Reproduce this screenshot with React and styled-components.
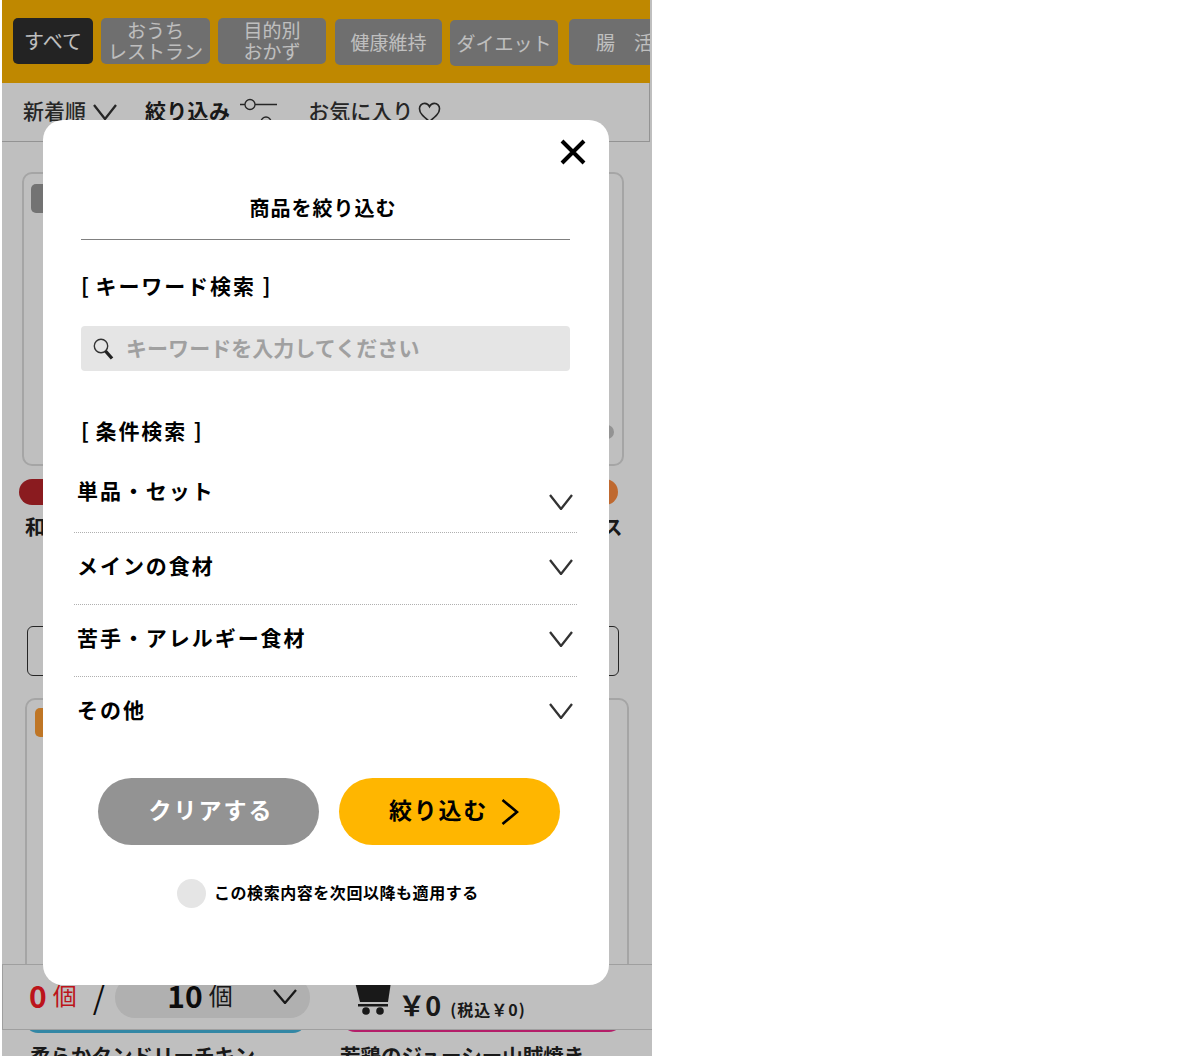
import React from "react";
import styled, { createGlobalStyle } from "styled-components";

const Global = createGlobalStyle`
  html, body { margin: 0; padding: 0; background: #fff; }
  body { font-family: "Noto Sans CJK JP", "Noto Sans", sans-serif; color: #222; }
  * { box-sizing: border-box; }
`;

const Page = styled.div`
  position: relative;
  width: 650px;
  height: 1056px;
  margin-left: 2px;
  background: #fff;
  overflow: hidden;
`;
const TabBar = styled.div`
  display: flex;
  align-items: flex-start;
  gap: 8px;
  width: 648px;
  height: 83px;
  padding: 18px 0 0 11px;
  background: #ffb600;
  overflow: hidden;
`;
const Tab = styled.div`
  flex: none;
  display: flex;
  align-items: center;
  justify-content: center;
  width: ${(p) => p.$w}px;
  height: 46px;
  margin-top: ${(p) => p.$drop || 0}px;
  margin-left: ${(p) => p.$ml || 0}px;
  padding-bottom: 2px;
  border-radius: 5px;
  background: ${(p) => (p.$active ? "#2f2f2f" : "#959595")};
  color: #fff;
  font-size: ${(p) => (p.$active ? 20 : 19)}px;
  line-height: 21px;
  text-align: center;
  white-space: pre-line;
`;
const SortBar = styled.div`
  display: flex;
  align-items: flex-start;
  width: 648px;
  height: 59px;
  padding: 14px 0 0 21px;
  border-right: 1px solid #c4c4c4;
  border-bottom: 1px solid #c4c4c4;
  font-size: 21px;
  font-weight: 500;
  color: #333;
`;
const SortItem = styled.div`
  display: flex;
  align-items: center;
  gap: ${(p) => p.$gap || 8}px;
  margin-right: ${(p) => p.$mr || 0}px;
  font-weight: ${(p) => p.$weight || 500};
  letter-spacing: ${(p) => p.$ls || 0}px;
  color: ${(p) => p.$color || "#333"};
`;
const SortText = styled.span`
  line-height: 26px;
  margin-bottom: 4px;
`;
const List = styled.div`
  padding: 30px 0 0;
`;
const Card = styled.div`
  position: relative;
  width: ${(p) => p.$w}px;
  height: ${(p) => p.$h}px;
  margin-left: ${(p) => p.$ml}px;
  border: 2px solid #dcdcdc;
  border-radius: 10px;
  background: #fff;
`;
const CardBadge = styled.div`
  width: 60px;
  height: 29px;
  margin: ${(p) => p.$m};
  border-radius: 5px;
  background: ${(p) => p.$bg};
`;
const CardDot = styled.span`
  position: absolute;
  right: ${(p) => p.$r}px;
  bottom: ${(p) => p.$b}px;
  width: 14px;
  height: 14px;
  border-radius: 50%;
  background: #c4c4c4;
`;
const PillRow = styled.div`
  display: flex;
  justify-content: space-between;
  margin: ${(p) => p.$m};
  padding: ${(p) => p.$p};
`;
const Pill = styled.div`
  width: ${(p) => p.$w}px;
  height: 26px;
  margin-top: ${(p) => p.$mt || 0}px;
  border-radius: 13px;
  background: ${(p) => p.$bg};
`;
const NameRow = styled.div`
  display: flex;
  justify-content: space-between;
  height: 30px;
  margin: ${(p) => p.$m};
  padding: ${(p) => p.$p};
  font-size: 20.5px;
  font-weight: 700;
  line-height: 26px;
  color: #222;
`;
const NameCell = styled.div`
  width: ${(p) => p.$w}px;
  white-space: nowrap;
`;
const MoreButton = styled.div`
  width: 592px;
  height: 50px;
  margin: 83px 0 22px 25px;
  border: 1px solid #333;
  border-radius: 6px;
`;

const BottomBar = styled.div`
  position: absolute;
  left: 0;
  top: 964px;
  width: 652px;
  height: 66px;
  display: flex;
  align-items: center;
  padding: 0 0 4px 26px;
  background: #fff;
  border: 1px solid #d4d4d4;
`;
const Count = styled.span`
  font-size: ${(p) => p.$size}px;
  font-weight: ${(p) => p.$weight};
  color: ${(p) => p.$color || "#111"};
  line-height: 40px;
  margin: ${(p) => p.$m || 0};
`;
const Slash = styled.span`
  font-size: 32px;
  line-height: 40px;
  margin: 0 10px 0 16px;
  color: #111;
`;
const Select = styled.div`
  display: flex;
  align-items: center;
  width: 195px;
  height: 41px;
  margin-top: 4px;
  padding: 0 0 4px 52px;
  border-radius: 20px;
  background: #ebebeb;
`;
const SelectArrow = styled.span`
  display: flex;
  margin: 2px 0 0 40px;
`;
const CartWrap = styled.span`
  display: flex;
  margin: 4px 7px 0 45px;
`;
const TotalBox = styled.div`
  display: flex;
  flex-direction: column;
  gap: 6px;
  margin-top: 4px;
`;
const TotalLabel = styled.span`
  font-size: 12px;
  line-height: 14px;
  font-weight: 700;
  color: #222;
`;
const TotalLine = styled.div`
  display: flex;
  align-items: baseline;
  line-height: 34px;
  color: #222;
`;
const TotalPrice = styled.span`
  font-size: 27px;
  font-weight: 700;
  margin-right: 9px;
`;
const TotalTax = styled.span`
  font-size: 16px;
  font-weight: 700;
  letter-spacing: 1px;
`;

const Overlay = styled.div`
  position: absolute;
  inset: 0;
  background: rgba(0, 0, 0, 0.25);
`;
const Modal = styled.div`
  position: absolute;
  left: 41px;
  top: 120px;
  width: 566px;
  height: 865px;
  padding: 73px 39px 0 38px;
  border-radius: 20px;
  background: #fff;
  color: #000;
`;
const Close = styled.span`
  position: absolute;
  right: 23px;
  top: 19px;
  display: flex;
`;
const Title = styled.div`
  height: 47px;
  padding-right: 5px;
  border-bottom: 1.4px solid #808080;
  font-size: 20px;
  font-weight: 700;
  line-height: 30px;
  letter-spacing: 1px;
  text-align: center;
`;
const Heading = styled.div`
  margin-top: ${(p) => p.$mt}px;
  height: 30px;
  font-size: 21px;
  font-weight: 700;
  line-height: 26px;
  letter-spacing: 1.9px;
  word-spacing: -2px;
`;
const HeadingClose = styled.span`
  margin-left: 2px;
`;
const SearchBox = styled.div`
  display: flex;
  align-items: center;
  gap: 12px;
  height: 45px;
  margin-top: 24px;
  padding-left: 12px;
  border-radius: 4px;
  background: #e5e5e5;
`;
const Placeholder = styled.span`
  margin-bottom: 4px;
  font-size: 21px;
  font-weight: 700;
  letter-spacing: 0.05px;
  color: #a0a0a0;
`;
const Rows = styled.div`
  margin: 0 -7px;
`;
const Row = styled.div`
  display: flex;
  align-items: center;
  justify-content: space-between;
  height: ${(p) => (p.$first ? 86 : 72)}px;
  padding: ${(p) => (p.$first ? "30px 4px 25px 3px" : "0 4px 4px 3px")};
  border-bottom: ${(p) => (p.$last ? "none" : "1px dotted #b0b0b0")};
`;
const RowLabel = styled.span`
  margin-bottom: 4px;
  font-size: 21px;
  font-weight: 700;
  line-height: 26px;
  letter-spacing: 1.95px;
`;
const RowArrow = styled.span`
  display: flex;
  margin-top: ${(p) => p.$mt || 0}px;
`;
const Buttons = styled.div`
  display: flex;
  gap: 20px;
  margin: 29px 0 0 17px;
`;
const Button = styled.div`
  display: flex;
  align-items: center;
  justify-content: center;
  gap: 13px;
  width: 221px;
  height: 67px;
  padding-left: ${(p) => (p.$primary ? 9 : 5)}px;
  border-radius: 34px;
  background: ${(p) => (p.$primary ? "#ffb600" : "#939393")};
  color: ${(p) => (p.$primary ? "#000" : "#fff")};
  font-size: 23px;
  font-weight: 700;
  letter-spacing: ${(p) => (p.$primary ? 1.8 : 2)}px;
`;
const ButtonText = styled.span`
  margin-bottom: 6px;
`;
const SaveRow = styled.div`
  display: flex;
  align-items: center;
  gap: 8px;
  margin: 34px 0 0 96px;
`;
const SaveCircle = styled.span`
  width: 29px;
  height: 29px;
  border-radius: 50%;
  background: #e5e5e5;
`;
const SaveText = styled.span`
  margin-bottom: 4px;
  font-size: 16px;
  font-weight: 700;
  letter-spacing: 0.55px;
`;

const Chevron = ({ w = 24, h = 16, sw = 2.3, color = "#333" }) => (
  <svg width={w} height={h} viewBox={`0 0 ${w} ${h}`} fill="none">
    <polyline points={`1,1 ${w / 2},${h - 1} ${w - 1},1`} stroke={color} strokeWidth={sw} />
  </svg>
);

const tabs = [
  { t: "すべて", w: 80, active: true },
  { t: "おうち\nレストラン", w: 109 },
  { t: "目的別\nおかず", w: 108 },
  { t: "健康維持", w: 107, drop: 1, ml: 1 },
  { t: "ダイエット", w: 108, drop: 2 },
  { t: "腸　活", w: 111, drop: 1, ml: 3 },
];
const rows = ["メインの食材", "苦手・アレルギー食材"];

const BottomStrip = styled.div`
  position: absolute;
  left: 0;
  top: 1007px;
  width: 650px;
`;

function BottomProducts() {
  return (
    <BottomStrip>
      <PillRow $m="0" $p="0 30px 0 23px">
        <Pill $w={281} $bg="#45b5dc" />
        <Pill $w={280} $mt={-1} $bg="#f0288c" />
      </PillRow>
      <NameRow $m="9px 0 0" $p="0 28px 0 28px">
        <NameCell $w={310}>柔らかタンドリーチキン</NameCell>
        <NameCell $w={284}>若鶏のジューシー山賊焼き</NameCell>
      </NameRow>
    </BottomStrip>
  );
}

export default function App() {
  return (
    <>
      <Global />
      <Page>
        <TabBar>
          {tabs.map((x) => (
            <Tab key={x.t} $w={x.w} $active={x.active} $drop={x.drop} $ml={x.ml}>
              {x.t}
            </Tab>
          ))}
        </TabBar>
        <SortBar>
          <SortItem $mr={28} $gap={7}>
            <SortText>新着順</SortText>
            <Chevron w={24} h={16} />
          </SortItem>
          <SortItem $mr={30} $gap={10} $weight={700} $ls={0.3} $color="#222">
            <SortText>絞り込み</SortText>
            <svg width="38" height="30" viewBox="0 0 38 30" fill="none">
              <path d="M0 7.5h5M15 7.5h22M0 25h21M31 25h6" stroke="#333" strokeWidth="1.3" />
              <circle cx="10" cy="7.5" r="5" stroke="#333" strokeWidth="1.3" />
              <circle cx="26" cy="25" r="5" stroke="#333" strokeWidth="1.3" />
            </svg>
          </SortItem>
          <SortItem $gap={5}>
            <SortText>お気に入り</SortText>
            <svg width="23" height="21" viewBox="0 0 24 22" fill="none">
              <path
                d="M12 20.5C6 15.5 1.5 12 1.5 7A5.4 5.4 0 0 1 7 1.5C9.2 1.5 11 2.8 12 4.8 13 2.8 14.8 1.5 17 1.5A5.4 5.4 0 0 1 22.5 7C22.5 12 18 15.5 12 20.5Z"
                stroke="#333"
                strokeWidth="1.7"
              />
            </svg>
          </SortItem>
        </SortBar>
        <List>
          <Card $w={602} $h={294} $ml={20}>
            <CardBadge $m="10px 0 0 7px" $bg="#9a9a9a" />
            <CardDot $r={8} $b={25} />
          </Card>
          <PillRow $m="13px 0 0" $p="0 34px 0 17px">
            <Pill $w={280} $bg="#b8242a" />
            <Pill $w={280} $bg="#ff8d40" />
          </PillRow>
          <NameRow $m="8px 0 0" $p="0 30px 0 23px">
            <NameCell $w={280}>和風ハンバーグ</NameCell>
            <NameCell $w={20}>ス</NameCell>
          </NameRow>
          <MoreButton />
          <Card $w={604} $h={330} $ml={23}>
            <CardBadge $m="8px 0 0 8px" $bg="#ff9e33" />
            <CardDot $r={8} $b={24} />
          </Card>
        </List>
        <BottomProducts />
        <BottomBar>
          <Count $size={30} $weight={700} $color="#fb1b24" $m="0 6px 0 0">0</Count>
          <Count $size={24} $weight={400} $color="#fb1b24">個</Count>
          <Slash>/</Slash>
          <Select>
            <Count $size={30} $weight={700} $m="0 6px 0 0">10</Count>
            <Count $size={24} $weight={400} $color="#222">個</Count>
            <SelectArrow>
              <Chevron w={24} h={15} color="#222" />
            </SelectArrow>
          </Select>
          <CartWrap>
            <svg width="36" height="36" viewBox="0 0 36 36" fill="#222">
              <path d="M0 3h36l-3 20H5z" />
              <path d="M3 25h30v2.5H3z" />
              <circle cx="11" cy="32" r="3.8" />
              <circle cx="25" cy="32" r="3.8" />
            </svg>
          </CartWrap>
          <TotalBox>
            <TotalLabel>合計</TotalLabel>
            <TotalLine>
              <TotalPrice>￥0</TotalPrice>
              <TotalTax>(税込￥0)</TotalTax>
            </TotalLine>
          </TotalBox>
        </BottomBar>
        <Overlay />
        <Modal>
          <Close>
            <svg width="26" height="26" viewBox="0 0 26 26" fill="none">
              <path d="M2 2l22 22M24 2L2 24" stroke="#000" strokeWidth="4" />
            </svg>
          </Close>
          <Title>商品を絞り込む</Title>
          <Heading $mt={32}>
            [ キーワード検索 <HeadingClose>]</HeadingClose>
          </Heading>
          <SearchBox>
            <svg width="21" height="22" viewBox="0 0 21 22" fill="none">
              <circle cx="8" cy="8" r="6.7" stroke="#333" strokeWidth="1.4" />
              <path d="M12.5 13l6.5 7.5" stroke="#222" strokeWidth="3.4" />
            </svg>
            <Placeholder>キーワードを入力してください</Placeholder>
          </SearchBox>
          <Heading $mt={46}>
            [ 条件検索 <HeadingClose>]</HeadingClose>
          </Heading>
          <Rows>
            <Row $first>
              <RowLabel>単品・セット</RowLabel>
              <RowArrow $mt={20}>
                <Chevron />
              </RowArrow>
            </Row>
            {rows.map((r) => (
              <Row key={r}>
                <RowLabel>{r}</RowLabel>
                <RowArrow>
                  <Chevron />
                </RowArrow>
              </Row>
            ))}
            <Row $last>
              <RowLabel>その他</RowLabel>
              <RowArrow>
                <Chevron />
              </RowArrow>
            </Row>
          </Rows>
          <Buttons>
            <Button>
              <ButtonText>クリアする</ButtonText>
            </Button>
            <Button $primary>
              <ButtonText>絞り込む</ButtonText>
              <svg width="18" height="26" viewBox="0 0 18 26" fill="none">
                <polyline points="1.5,1 16,13 1.5,25" stroke="#000" strokeWidth="2.6" />
              </svg>
            </Button>
          </Buttons>
          <SaveRow>
            <SaveCircle />
            <SaveText>この検索内容を次回以降も適用する</SaveText>
          </SaveRow>
        </Modal>
      </Page>
    </>
  );
}
